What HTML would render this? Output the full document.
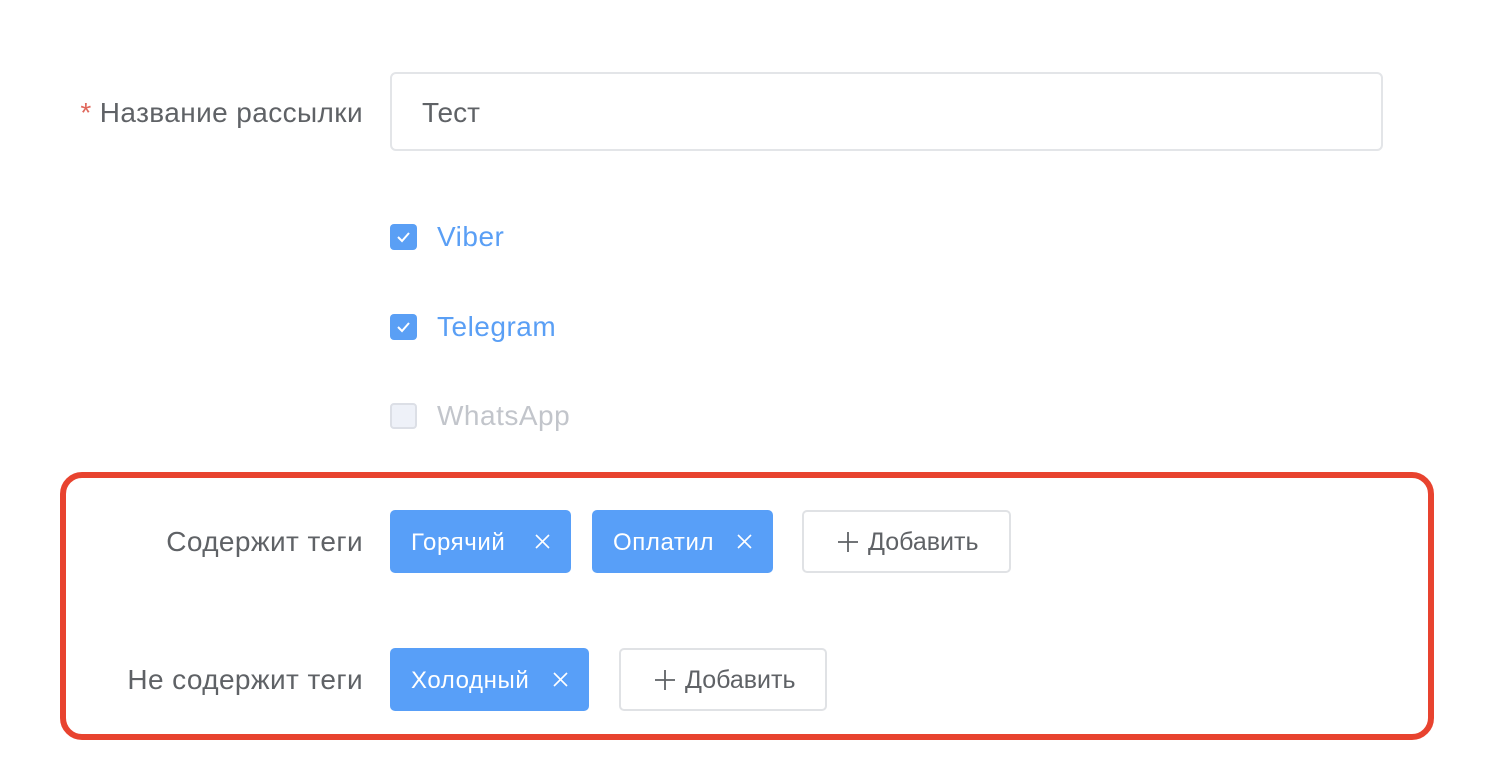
<!DOCTYPE html>
<html><head><meta charset="utf-8"><style>
body{margin:0;width:1500px;height:764px;background:#fff;font-family:"Liberation Sans",sans-serif;position:relative;overflow:hidden}
.a{position:absolute}
.lbl{font-size:28px;letter-spacing:0.4px;color:#5f6266;text-align:right;right:1137px;white-space:nowrap}
.cb{width:27px;height:26px;border-radius:4px;background:#5a9ff5}
.cb svg{position:absolute;left:6px;top:6px}
.ct{font-size:28px;letter-spacing:0.5px;color:#5a9ff5;left:437px}
.tag{background:#589ff8;border-radius:5px;color:#fff;font-size:24px;letter-spacing:0.6px;height:63px;line-height:65px;box-sizing:border-box;padding-left:21px}
.tag svg{position:absolute;right:21px;top:24px}
.add{border:2px solid #e0e2e5;border-radius:5px;height:63px;box-sizing:border-box;font-size:25px;color:#5f6266;line-height:61px;padding-left:34px}
.add svg{vertical-align:-2px;margin-right:10px}
</style></head><body>
<div class="a lbl" style="top:97px"><span style="color:#e0685c">*</span> Название рассылки</div>
<div class="a" style="left:390px;top:72px;width:993px;height:79px;border:2px solid #e3e5e8;border-radius:6px;box-sizing:border-box;font-size:28px;color:#5f6266;line-height:77px;padding-left:30px">Тест</div>
<div class="a cb" style="left:390px;top:224px"><svg width="15" height="14"><path d="M2 7 L6 11 L13 3" stroke="#fff" stroke-width="2" fill="none"/></svg></div>
<div class="a ct" style="top:221px">Viber</div>
<div class="a cb" style="left:390px;top:314px"><svg width="15" height="14"><path d="M2 7 L6 11 L13 3" stroke="#fff" stroke-width="2" fill="none"/></svg></div>
<div class="a ct" style="top:311px">Telegram</div>
<div class="a" style="left:390px;top:403px;width:27px;height:26px;border-radius:4px;background:#eef1f8;border:2px solid #dcdfe6;box-sizing:border-box"></div>
<div class="a ct" style="top:400px;color:#c2c5cb">WhatsApp</div>
<div class="a" style="left:60px;top:472px;width:1374px;height:268px;border:6px solid #e8432f;border-radius:22px;box-sizing:border-box"></div>
<div class="a lbl" style="top:526px">Содержит теги</div>
<div class="a tag" style="left:390px;top:510px;width:181px">Горячий<svg width="15" height="15"><path d="M1 1L14 14M14 1L1 14" stroke="#fff" stroke-width="1.6"/></svg></div>
<div class="a tag" style="left:592px;top:510px;width:181px">Оплатил<svg width="15" height="15"><path d="M1 1L14 14M14 1L1 14" stroke="#fff" stroke-width="1.6"/></svg></div>
<div class="a add" style="left:802px;top:510px;width:209px"><svg width="20" height="20"><path d="M10 0V20M0 10H20" stroke="#5f6266" stroke-width="1.8"/></svg>Добавить</div>
<div class="a lbl" style="top:664px">Не содержит теги</div>
<div class="a tag" style="left:390px;top:648px;width:199px">Холодный<svg width="15" height="15"><path d="M1 1L14 14M14 1L1 14" stroke="#fff" stroke-width="1.6"/></svg></div>
<div class="a add" style="left:619px;top:648px;width:208px"><svg width="20" height="20"><path d="M10 0V20M0 10H20" stroke="#5f6266" stroke-width="1.8"/></svg>Добавить</div>
</body></html>
